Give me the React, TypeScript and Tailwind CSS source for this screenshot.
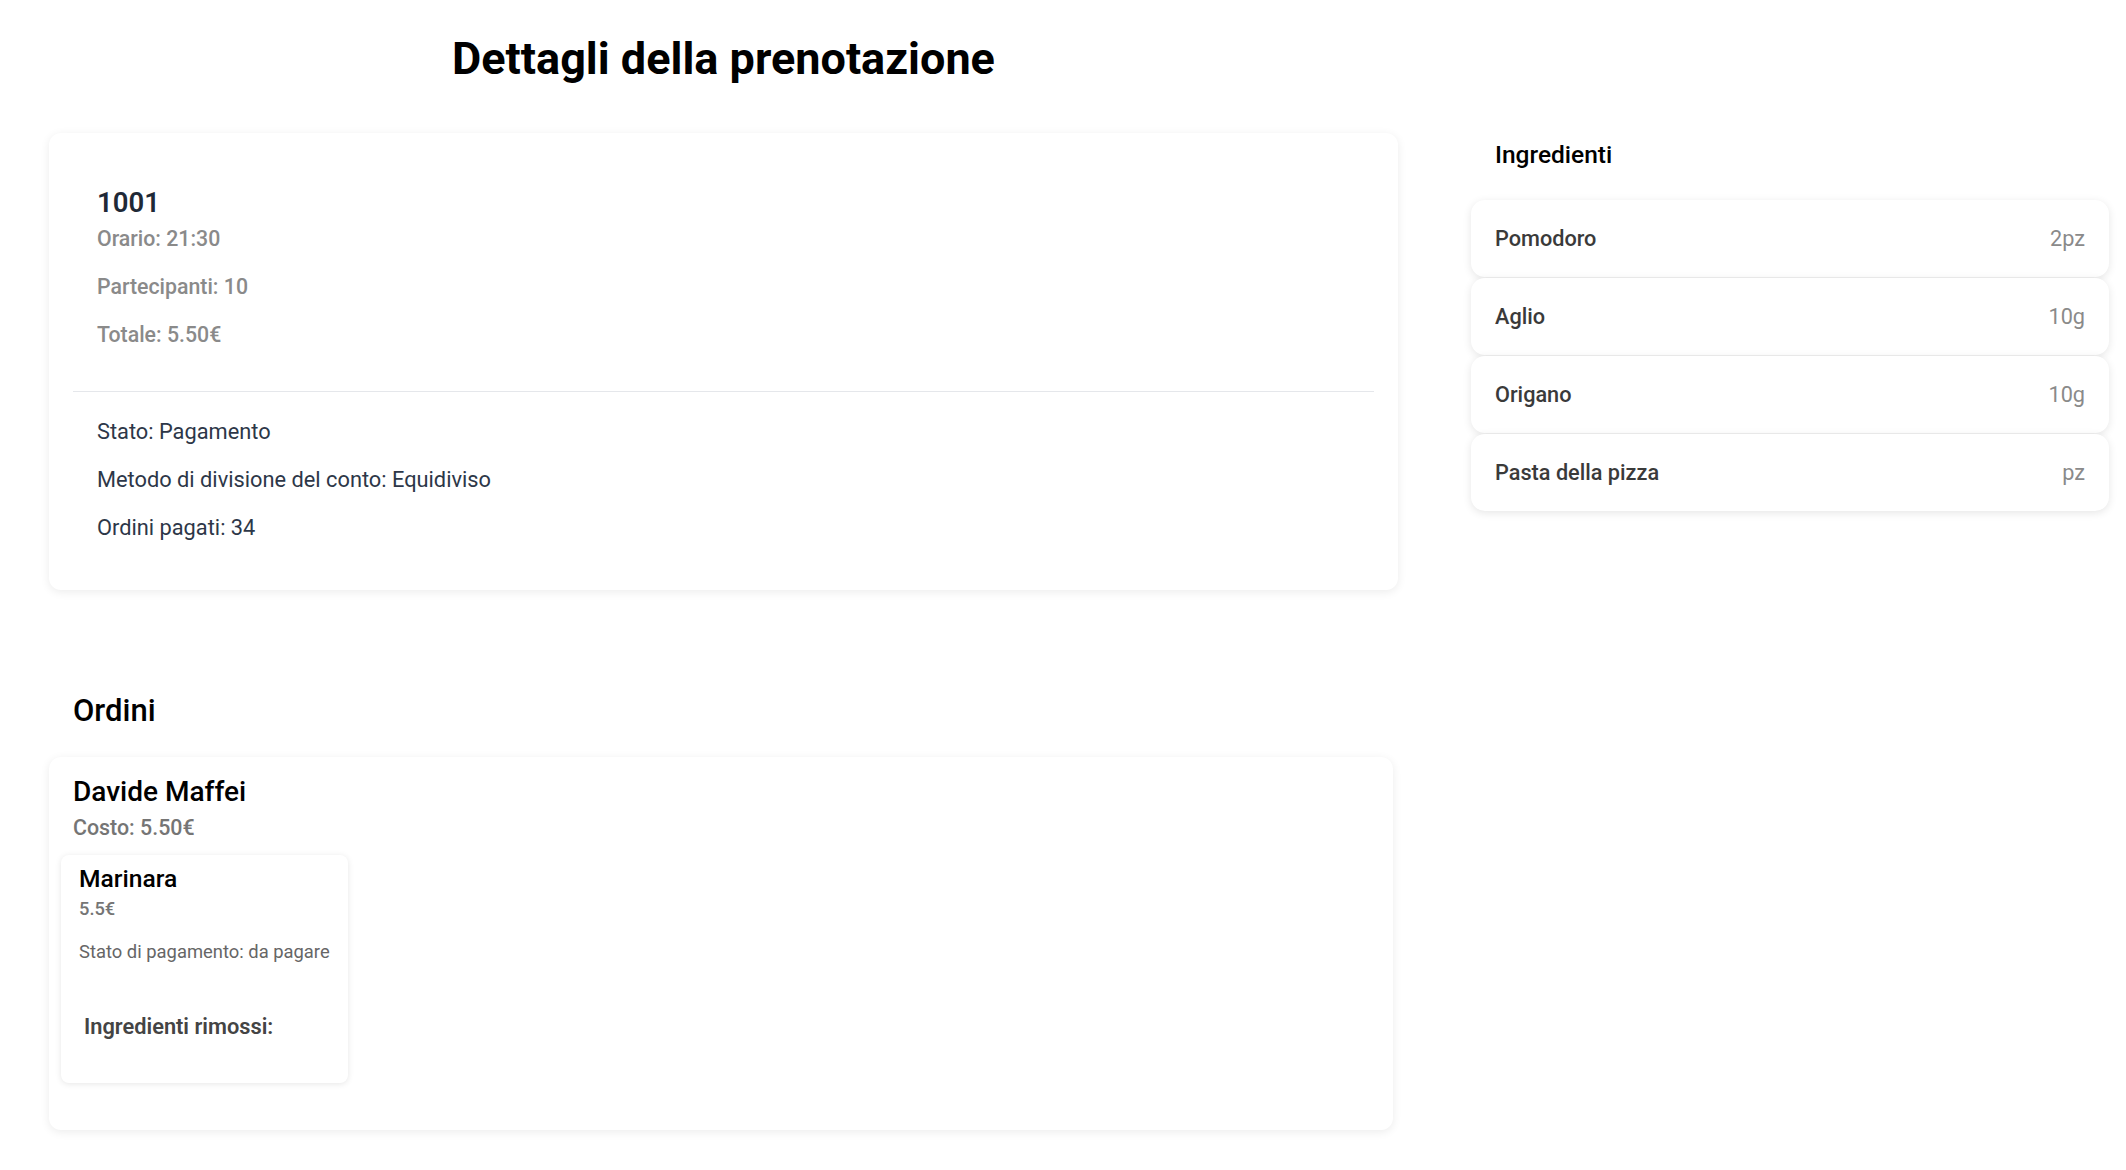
import React from "react"

const ingredienti = [
    { nome: "Pomodoro", qta: "2pz" },
    { nome: "Aglio", qta: "10g" },
    { nome: "Origano", qta: "10g" },
    { nome: "Pasta della pizza", qta: "pz" },
]

export default function App() {
    return (
        <div className="min-h-screen bg-white font-['Roboto',sans-serif] flex pl-[49px]">
            {/* colonna principale */}
            <div className="w-[1349px] flex flex-col">
                <h1 className="mt-[32px] text-center text-[45px] leading-[54px] font-bold text-black">Dettagli della prenotazione</h1>

                <div className="mt-[47px] bg-white rounded-xl shadow-[0_2px_10px_rgba(0,0,0,0.08)] px-6">
                    <div className="px-6 pt-[54px] pb-[42px] border-b border-[#e5e7eb]">
                        <h2 className="text-[27.5px] leading-[32px] font-semibold text-[#1f2937]">1001</h2>
                        <p className="mt-[6px] text-[21.3px] leading-[28px] font-medium text-[#8a8a8a]">Orario: 21:30</p>
                        <p className="mt-5 text-[21.3px] leading-[28px] font-medium text-[#8a8a8a]">Partecipanti: 10</p>
                        <p className="mt-5 text-[21.3px] leading-[28px] font-medium text-[#8a8a8a]">Totale: 5.50€</p>
                    </div>
                    <div className="px-6 pt-[26px] pb-[48px] text-[21.8px] leading-[28px] text-[#2d3748]">
                        <p>Stato: Pagamento</p>
                        <p className="mt-5">Metodo di divisione del conto: Equidiviso</p>
                        <p className="mt-5">Ordini pagati: 34</p>
                    </div>
                </div>

                <h2 className="mt-[103px] ml-6 text-[31px] leading-[36px] font-medium text-black">Ordini</h2>

                <div className="mt-[28px] w-[1344px] bg-white rounded-xl shadow-[0_2px_10px_rgba(0,0,0,0.08)] pt-[18px] pb-[47px]">
                    <div className="px-6">
                        <h3 className="text-[28px] leading-[34px] font-medium text-black">Davide Maffei</h3>
                        <p className="mt-[5px] text-[21.4px] leading-[28px] font-medium text-[#757575]">Costo: 5.50€</p>
                    </div>
                    <div className="mt-[13px] px-3 flex">
                        <div className="w-[287px] bg-white rounded-lg shadow-[0_1px_6px_rgba(0,0,0,0.1)] pt-[9px] pb-[42px] px-[18px]">
                            <h4 className="text-[24.6px] leading-[30px] font-medium text-black">Marinara</h4>
                            <p className="mt-[3px] text-[18.3px] leading-[24px] font-medium text-[#757575]">5.5€</p>
                            <p className="mt-[19px] text-[18.4px] leading-[24px] text-[#666666]">Stato di pagamento: da pagare</p>
                            <p className="mt-[49px] ml-[5px] text-[21.8px] leading-[28px] font-semibold text-[#444444]">Ingredienti rimossi:</p>
                        </div>
                    </div>
                </div>
            </div>

            {/* colonna ingredienti */}
            <div className="ml-[73px] w-[638px] pt-[140px]">
                <h2 className="px-6 text-[24.5px] leading-[30px] font-medium text-black">Ingredienti</h2>
                <ul className="mt-[30px] flex flex-col gap-px">
                    {ingredienti.map((i) => (
                        <li
                            key={i.nome}
                            className="h-[77px] flex items-center justify-between px-6 pt-[2px] bg-white rounded-[14px] shadow-[0_2px_8px_rgba(0,0,0,0.1)]"
                        >
                            <span className="text-[21.7px] font-medium text-[#3a3a3a]">{i.nome}</span>
                            <span className="text-[21.7px] text-[#8a8a8a]">{i.qta}</span>
                        </li>
                    ))}
                </ul>
            </div>
        </div>
    )
}
